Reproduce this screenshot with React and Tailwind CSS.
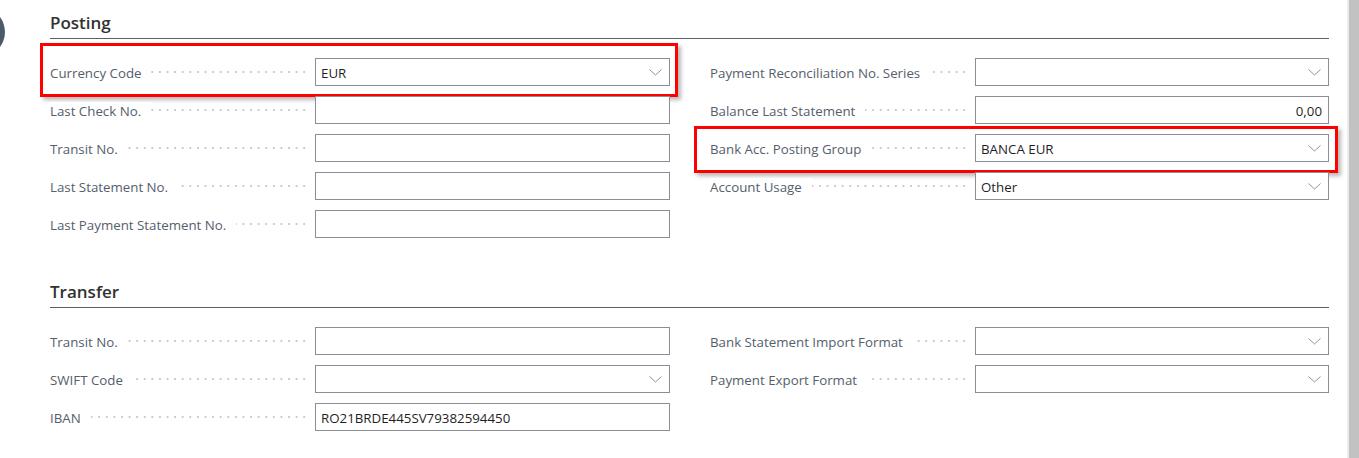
import React from 'react';

const posting = {
    left: [
        { label: 'Currency Code', value: 'EUR', select: true, highlight: 'currency' },
        { label: 'Last Check No.' },
        { label: 'Transit No.' },
        { label: 'Last Statement No.' },
        { label: 'Last Payment Statement No.' },
    ],
    right: [
        { label: 'Payment Reconciliation No. Series', select: true },
        { label: 'Balance Last Statement', value: '0,00', number: true },
        { label: 'Bank Acc. Posting Group', value: 'BANCA EUR', select: true, highlight: 'bank' },
        { label: 'Account Usage', value: 'Other', select: true },
    ],
};

const transfer = {
    left: [
        { label: 'Transit No.' },
        { label: 'SWIFT Code', select: true },
        { label: 'IBAN', value: 'RO21BRDE445SV79382594450' },
    ],
    right: [
        { label: 'Bank Statement Import Format', select: true },
        { label: 'Payment Export Format', select: true },
    ],
};

const Chevron = () => (
    <svg width="13" height="7" viewBox="0 0 13 7" fill="none" className="shrink-0">
        <path d="M0.5 0.5 L6.5 6 L12.5 0.5" stroke="#8d95a3" strokeWidth="1" />
    </svg>
);

const Field = ({ field, inputClass }) => (
    <div className="relative flex items-center h-[28px]">
        {/* red annotation frames drawn over the screenshot */}
        {field.highlight === 'currency' && (
            <div className="absolute left-[-10px] right-[-8px] top-[-15px] bottom-[-11px] border-[3px] border-[#ff0000] shadow-[3px_3px_4px_rgba(0,0,0,0.28)] pointer-events-none" />
        )}
        {field.highlight === 'bank' && (
            <div className="absolute left-[-16px] right-[-9px] top-[-8px] bottom-[-11px] border-[3px] border-[#ff0000] shadow-[3px_3px_4px_rgba(0,0,0,0.28)] pointer-events-none" />
        )}
        <div className="relative flex-1 h-full flex items-center mr-[7px] bg-[radial-gradient(circle,#c9cbcf_0.9px,transparent_1.1px)] bg-[length:7.6px_4px] bg-right bg-repeat-x">
            <span className="bg-white pr-[10px] pt-[1px] text-[13.3px] leading-[16px] text-[#555e6b] whitespace-nowrap">{field.label}</span>
        </div>
        <div className={`relative ${inputClass} h-full border border-[#8a8e96] bg-white flex items-center px-[5px]`}>
            <span className={`flex-1 pt-[1px] text-[13.3px] leading-[16px] text-[#1f1f1f] whitespace-nowrap ${field.number ? 'text-right pr-[1px]' : ''}`}>
                {field.value || ''}
            </span>
            {field.select && (
                <span className="pr-[2px]">
                    <Chevron />
                </span>
            )}
        </div>
    </div>
);

const Section = ({ title, data, className }) => (
    <div className={className}>
        <div className="pt-[11px] pb-[3px] border-b border-[#5b6069]">
            <h2 className="text-[17px] leading-[24px] font-semibold text-[#323232]">{title}</h2>
        </div>
        <div className="grid grid-cols-[620px_1fr] gap-x-[40px] mt-[19px]">
            <div className="flex flex-col gap-[10px]">
                {data.left.map((f, i) => (
                    <Field key={i} field={f} inputClass="w-[355px]" />
                ))}
            </div>
            <div className="flex flex-col gap-[10px]">
                {data.right.map((f, i) => (
                    <Field key={i} field={f} inputClass="w-[354px]" />
                ))}
            </div>
        </div>
    </div>
);

const App = () => {
    return (
        <div
            className="relative w-[1359px] h-[458px] bg-white overflow-hidden flex"
            style={{ fontFamily: '"Segoe UI", "Open Sans", "Noto Sans", sans-serif' }}
        >
            {/* partial avatar circle at the left edge */}
            <div className="absolute left-[-45px] top-[7px] w-[50px] h-[50px] rounded-full bg-[#4f5a69]" />

            <div className="flex-1 pl-[50px] pr-[18px]">
                <Section title="Posting" data={posting} />
                <Section title="Transfer" data={transfer} className="mt-[31px]" />
            </div>

            {/* page scrollbar */}
            <div className="w-[12px] h-full flex">
                <div className="w-[2px] bg-[#ececec]" />
                <div className="flex-1 bg-[#c2c2c2]" />
            </div>
        </div>
    );
};

export default App;
